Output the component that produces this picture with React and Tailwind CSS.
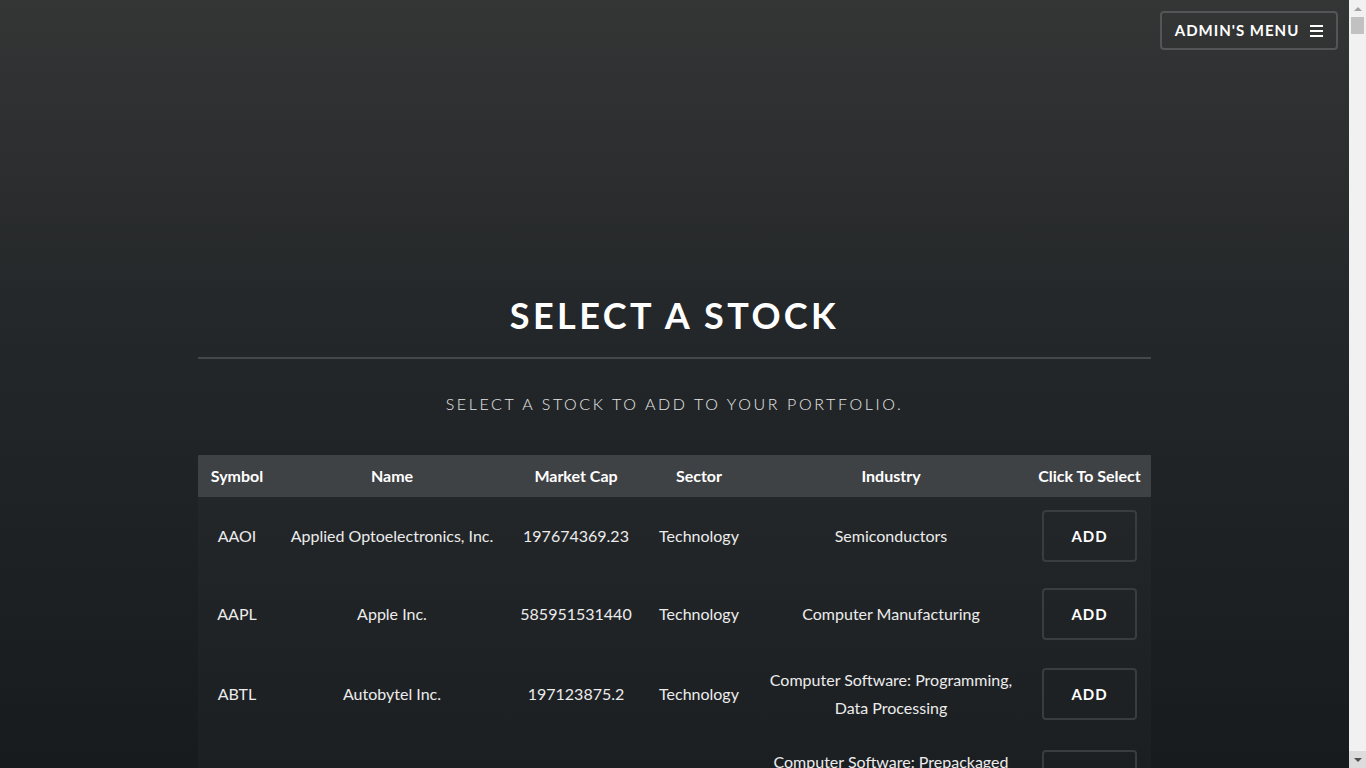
import { useState } from "react";

const stocks = [
  { symbol: "AAOI", name: "Applied Optoelectronics, Inc.", cap: "197674369.23", sector: "Technology", industry: "Semiconductors" },
  { symbol: "AAPL", name: "Apple Inc.", cap: "585951531440", sector: "Technology", industry: "Computer Manufacturing" },
  { symbol: "ABTL", name: "Autobytel Inc.", cap: "197123875.2", sector: "Technology", industry: "Computer Software: Programming, Data Processing" },
  { symbol: "ACIW", name: "ACI Worldwide, Inc.", cap: "2269815366.6", sector: "Technology", industry: "Computer Software: Prepackaged Software" },
  { symbol: "ADBE", name: "Adobe Systems Incorporated", cap: "37014128585.6", sector: "Technology", industry: "Computer Software: Prepackaged Software" },
  { symbol: "ADI", name: "Analog Devices, Inc.", cap: "17594371880.4", sector: "Technology", industry: "Semiconductors" },
];

function Scrollbar() {
  return (
    <div className="flex h-screen w-[17px] shrink-0 flex-col bg-[#f1f1f1]">
      <div className="flex h-[17px] items-center justify-center">
        <span className="block h-0 w-0 border-x-[4px] border-b-[4px] border-x-transparent border-b-[#a3a3a3]" />
      </div>
      <div className="mx-[2px] h-[17px] bg-[#c1c1c1]" />
      <div className="flex-1" />
      <div className="flex h-[17px] items-center justify-center bg-[#dcdcdc]">
        <span className="block h-0 w-0 border-x-[4px] border-t-[4px] border-x-transparent border-t-[#505050]" />
      </div>
    </div>
  );
}

export default function App() {
  const [picked, setPicked] = useState([]);

  return (
    <div className="flex h-screen overflow-hidden font-['Lato',sans-serif] text-white">
      <div className="relative h-screen flex-1 overflow-hidden bg-[#181b1e] bg-[linear-gradient(to_bottom,#343535_0px,#25282a_300px,#181b1e_768px)]">
        <button className="absolute top-[11px] right-[11px] flex h-[39px] w-[178px] items-center justify-center gap-[11px] rounded-[4px] border-2 border-[#535556] text-[15px] font-bold tracking-[1px] text-white">
          ADMIN'S MENU
          <span className="flex flex-col gap-[3px]">
            <span className="block h-[2px] w-[13px] bg-white" />
            <span className="block h-[2px] w-[13px] bg-white" />
            <span className="block h-[2px] w-[13px] bg-white" />
          </span>
        </button>

        <div className="mx-auto w-[953px] pt-[293px] pb-20">
          <h1 className="text-center text-[36px] font-bold leading-[44px] tracking-[3.4px]">SELECT A STOCK</h1>
          <hr className="mt-[20px] border-0 border-t-2 border-[#45484b]" />
          <p className="mt-[33px] text-center text-[16px] font-light leading-[24px] tracking-[2.6px] text-[#e6e6e6]">
            SELECT A STOCK TO ADD TO YOUR PORTFOLIO.
          </p>

          <table className="mt-[39px] w-full table-fixed border-collapse bg-white/[0.02] text-center text-[16px]">
            <colgroup>
              <col className="w-[78px]" />
              <col className="w-[232px]" />
              <col className="w-[136px]" />
              <col className="w-[110px]" />
              <col className="w-[274px]" />
              <col className="w-[123px]" />
            </colgroup>
            <thead>
              <tr className="h-[42px] bg-[#3f4245] font-bold">
                <th className="px-1">Symbol</th>
                <th className="px-1">Name</th>
                <th className="px-1">Market Cap</th>
                <th className="px-1">Sector</th>
                <th className="px-1">Industry</th>
                <th className="px-1 whitespace-nowrap">Click To Select</th>
              </tr>
            </thead>
            <tbody className="leading-[28px] text-[#ececec]">
              {stocks.map(s => (
                <tr key={s.symbol}>
                  <td className="px-2 py-[13px]">{s.symbol}</td>
                  <td className="px-2 py-[13px]">{s.name}</td>
                  <td className="px-2 py-[13px]">{s.cap}</td>
                  <td className="px-2 py-[13px]">{s.sector}</td>
                  <td className="px-[12px] py-[13px]">{s.industry}</td>
                  <td className="py-[13px]">
                    <button
                      onClick={() => setPicked([...picked, s.symbol])}
                      className="mx-auto flex h-[52px] w-[95px] items-center justify-center rounded-[4px] border-2 border-[#3a3d40] text-[15px] font-bold tracking-[1px] text-white"
                    >
                      ADD
                    </button>
                  </td>
                </tr>
              ))}
            </tbody>
          </table>
        </div>
      </div>
      <Scrollbar />
    </div>
  );
}
